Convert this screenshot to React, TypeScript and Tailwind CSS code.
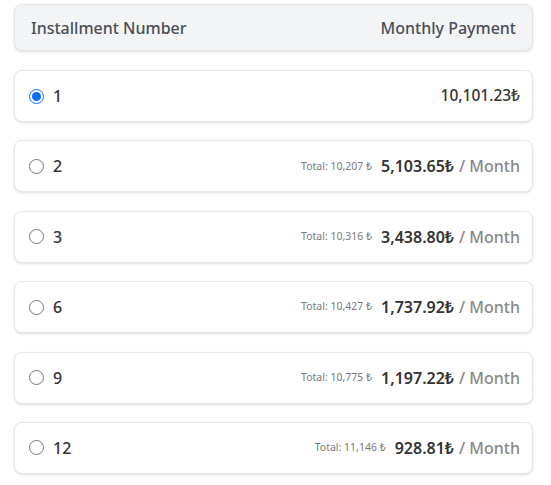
import { useState } from 'react';

interface Plan {
  count: number;
  monthly: string;
  total: string | null;
}

const plans: Plan[] = [
  { count: 1, monthly: '10,101.23₺', total: null },
  { count: 2, monthly: '5,103.65₺', total: '10,207 ₺' },
  { count: 3, monthly: '3,438.80₺', total: '10,316 ₺' },
  { count: 6, monthly: '1,737.92₺', total: '10,427 ₺' },
  { count: 9, monthly: '1,197.22₺', total: '10,775 ₺' },
  { count: 12, monthly: '928.81₺', total: '11,146 ₺' },
];

export default function App() {
  const [selected, setSelected] = useState(1);

  return (
    <div className="bg-white min-h-screen pt-1 pl-[14px] pr-[18px] font-['Noto_Sans',sans-serif] text-[#333]">
      {/* Header */}
      <div className="h-[47px] flex items-center justify-between px-4 bg-[#f3f4f6] border border-[#e5e7eb] rounded-lg shadow-sm text-[16px] font-medium text-[#4a4f57]">
        <span>Installment Number</span>
        <span>Monthly Payment</span>
      </div>

      {/* Options */}
      <div className="flex flex-col gap-[18.4px] mt-[19px]">
        {plans.map((p) => (
          <label
            key={p.count}
            className="h-[52px] flex items-center justify-between pl-[14px] pr-3 bg-white border border-[#e5e7eb] rounded-lg shadow-sm cursor-pointer"
          >
            <div className="flex items-center gap-[9px]">
              <input
                type="radio"
                name="installment"
                checked={selected === p.count}
                onChange={() => setSelected(p.count)}
                className="w-[15px] h-[15px] m-0 accent-[#0d6efd]"
              />
              <span className="text-[16px] font-medium">{p.count}</span>
            </div>
            {p.total ? (
              <div className="flex items-center">
                <span className="text-[10.5px] text-[#7a7a7a] mr-[9px]">Total: {p.total}</span>
                <span className="text-[16px] font-semibold">{p.monthly}</span>
                <span className="text-[16px] font-medium text-[#888] ml-[5px]">/ Month</span>
              </div>
            ) : (
              <span className="text-[15.5px] font-medium">{p.monthly}</span>
            )}
          </label>
        ))}
      </div>
    </div>
  );
}
